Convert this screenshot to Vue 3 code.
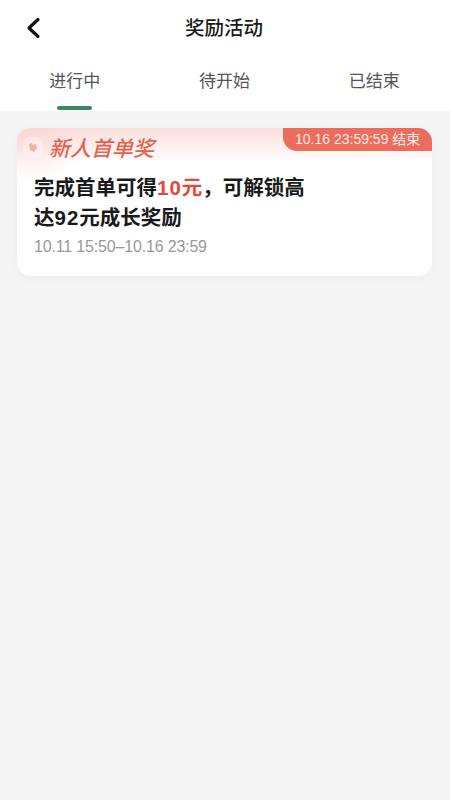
<template>
  <div class="page">
    <div class="top">
      <div class="nav">
        <svg class="back" width="16" height="24" viewBox="0 0 16 24">
          <path d="M13 3.5 L4 12 L13 20.5" fill="none" stroke="#111" stroke-width="3.2" stroke-linecap="round" stroke-linejoin="round" />
        </svg>
        <div class="title">奖励活动</div>
      </div>
      <div class="tabs">
        <div v-for="(tab, i) in tabs" :key="tab" class="tab">
          {{ tab }}
          <div v-if="i === 0" class="tab-line"></div>
        </div>
      </div>
    </div>

    <div class="list">
      <div class="card">
        <div class="card-head">
          <div class="head-left">
            <div class="badge">
              <svg width="14" height="14" viewBox="0 0 14 14">
                <path d="M3 4 L6 3 L7 5 L10 4 L11 8 L8 12 L4 10 Z" fill="#efb4a9" />
              </svg>
            </div>
            <span class="head-name">新人首单奖</span>
          </div>
          <div class="countdown">10.16 23:59:59 结束</div>
        </div>
        <div class="card-body">
          <div class="desc">完成首单可得<span class="red"><span class="num">10</span>元</span>，可解锁高<br />达<span class="num">92</span>元成长奖励</div>
          <div class="date">10.11 15:50–10.16 23:59</div>
        </div>
      </div>
    </div>
  </div>
</template>

<script setup>
const tabs = ['进行中', '待开始', '已结束']
</script>

<style>
html, body {
  margin: 0;
  background: #f4f4f4;
}
</style>

<style scoped>
.page {
  height: 800px;
  overflow: hidden;
  display: flex;
  flex-direction: column;
  background: #f4f4f4;
  font-family: "Liberation Sans", "Noto Sans CJK SC", sans-serif;
}

.top {
  background: #fff;
  height: 111px;
  flex-shrink: 0;
}

.nav {
  height: 52px;
  padding-right: 2px;
  position: relative;
  display: flex;
  align-items: center;
  justify-content: center;
}

.back {
  position: absolute;
  left: 25px;
  top: 16px;
}

.title {
  font-size: 19.5px;
  font-weight: 500;
  color: #1a1a1a;
}

.tabs {
  display: flex;
  height: 59px;
  padding-right: 1px;
}

.tab {
  flex: 1;
  position: relative;
  text-align: center;
  padding-top: 17px;
  font-size: 17px;
  line-height: 26px;
  color: #555;
}

.tab-line {
  position: absolute;
  left: 50%;
  bottom: 1px;
  width: 35px;
  height: 4px;
  margin-left: -18px;
  border-radius: 2px;
  background: #3a8a5f;
}

.list {
  padding: 17px 17px 0;
}

.card {
  width: 415px;
  height: 148px;
  border-radius: 14px;
  overflow: hidden;
  background:
    radial-gradient(ellipse 60px 42px at 10px 12px, rgba(250, 205, 200, 0.55), rgba(250, 205, 200, 0)),
    linear-gradient(180deg, #fbdfdb 0, #fff 34px);
  box-shadow: 0 2px 10px rgba(0, 0, 0, 0.03);
}

.card-head {
  display: flex;
  justify-content: space-between;
  height: 23px;
}

.head-left {
  display: flex;
  align-items: center;
  padding: 15px 0 0 6px;
}

.badge {
  width: 20px;
  height: 21px;
  margin-right: 6px;
  border-radius: 7px;
  background: rgba(255, 245, 243, 0.5);
  display: flex;
  align-items: center;
  justify-content: center;
}

.head-name {
  font-size: 21px;
  font-style: italic;
  font-weight: 500;
  color: #e8604f;
  white-space: nowrap;
}

.countdown {
  width: 149px;
  height: 23px;
  box-sizing: border-box;
  padding-left: 12px;
  line-height: 23px;
  font-size: 14px;
  color: #fde9e5;
  background: #ec6d5d;
  border-bottom-left-radius: 14px;
  white-space: nowrap;
}

.card-body {
  padding: 22px 17px 0;
}

.desc {
  font-size: 20.5px;
  line-height: 30px;
  font-weight: 600;
  color: #1a1a1a;
}

.num {
  letter-spacing: 1px;
}

.red {
  color: #e5483a;
}

.date {
  margin-top: 3px;
  font-size: 16px;
  line-height: 22px;
  letter-spacing: -0.17px;
  color: #999;
}
</style>
